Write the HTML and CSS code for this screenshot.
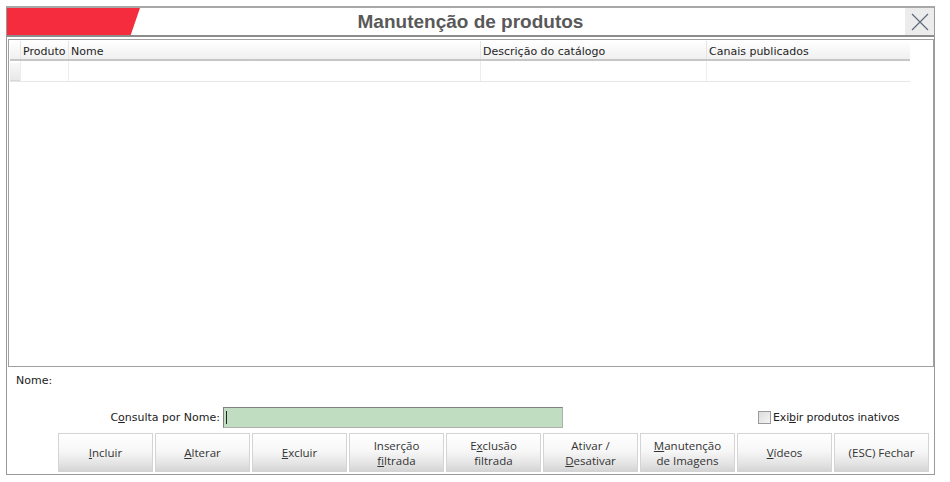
FILE: index.html
```html
<!DOCTYPE html>
<html lang="pt-BR">
<head>
<meta charset="utf-8">
<title>Manutenção de produtos</title>
<link rel="stylesheet" href="styles.css">
</head>
<body>
<div class="window">
  <div class="titlebar">
    <div class="brand"></div>
    <div class="title">Manutenção de produtos</div>
    <div class="close">
      <svg width="18" height="18" viewBox="0 0 18 18"><path d="M1 1 L17 17 M17 1 L1 17" stroke="#5f6b7c" stroke-width="1.2" fill="none"/></svg>
    </div>
  </div>
  <div class="grid">
    <div class="row head">
      <div class="cell ind"></div>
      <div class="cell c1">Produto</div>
      <div class="cell c2">Nome</div>
      <div class="cell c3">Descrição do catálogo</div>
      <div class="cell c4">Canais publicados</div>
    </div>
    <div class="row data">
      <div class="cell ind"></div>
      <div class="cell c1"></div>
      <div class="cell c2"></div>
      <div class="cell c3"></div>
      <div class="cell c4"></div>
    </div>
  </div>
  <div class="nome">Nome:</div>
  <div class="search">
    <label class="slabel">C<u>o</u>nsulta por Nome:</label>
    <div class="input"><span class="caret"></span></div>
    <div class="check"><span class="box"></span>Exi<u>b</u>ir produtos inativos</div>
  </div>
  <div class="buttons">
    <div class="btn"><span><u>I</u>ncluir</span></div>
    <div class="btn"><span><u>A</u>lterar</span></div>
    <div class="btn"><span><u>E</u>xcluir</span></div>
    <div class="btn"><span>Inserção<br><u>f</u>iltrada</span></div>
    <div class="btn"><span>E<u>x</u>clusão<br>filtrada</span></div>
    <div class="btn"><span>Ativar /<br><u>D</u>esativar</span></div>
    <div class="btn"><span><u>M</u>anutenção<br>de Imagens</span></div>
    <div class="btn"><span><u>V</u>ídeos</span></div>
    <div class="btn"><span>(ESC) Fechar</span></div>
  </div>
</div>
</body>
</html>
```
FILE: styles.css
```css
* { box-sizing: border-box; }
body {
  margin: 0;
  background: #ffffff;
  font-family: "DejaVu Sans", Tahoma, sans-serif;
  font-size: 11px;
  color: #222;
}
.window {
  margin: 6px 0 0 6px;
  width: 929px;
  height: 469px;
  border: 1px solid #9a9a9a;
  border-top: 2px solid #a8a8a8;
  display: flex;
  flex-direction: column;
  background: #fff;
}
.titlebar {
  height: 29px;
  display: flex;
  align-items: stretch;
  border-bottom: 2px solid #8c8c8c;
}
.brand {
  width: 133px;
  background: #f52c3d;
  clip-path: polygon(0 0, 100% 0, 93% 100%, 0 100%);
}
.title {
  flex: 1;
  text-align: center;
  font-family: "Liberation Sans", Arial, sans-serif;
  font-weight: bold;
  font-size: 19px;
  color: #595959;
  line-height: 28px;
  padding-right: 104px;
}
.close {
  width: 29px;
  background: #ececec;
  display: flex;
  align-items: center;
  justify-content: center;
}
.grid {
  margin: 2px 0 0 1px;
  width: 926px;
  height: 328px;
  border: 1px solid #a0a0a0;
  padding: 1px;
}
.row { display: flex; }
.cell { flex: none; padding-left: 2px; white-space: nowrap; }
.ind { width: 10px; }
.c1 { width: 48px; }
.c2 { width: 412px; }
.c3 { width: 226px; }
.c4 { width: 204px; }
.head {
  height: 20px;
  width: 900px;
  background: linear-gradient(#ffffff, #f0f0f0);
  border-bottom: 2px solid #c6c6c6;
}
.head .cell {
  line-height: 18px;
  padding-top: 2px;
  color: #1e1e1e;
  border-left: 1px solid #e4e4e4;
}
.head .ind { border-left: none; }
.data { height: 21px; width: 900px; border-bottom: 1px solid #e6e6e6; }
.data .cell { border-left: 1px solid #ececec; }
.data .ind {
  border-left: none;
  background: linear-gradient(#f8f8f8, #e8e8e8);
  border-bottom: 1px solid #d8d8d8;
  margin-top: 2px;
  height: 18px;
}
.nome {
  margin: 6px 0 0 9px;
  height: 16px;
  line-height: 16px;
  color: #222;
}
.search {
  margin-top: 17px;
  height: 22px;
  display: flex;
  align-items: center;
}
.slabel {
  width: 216px;
  text-align: right;
  padding-right: 3px;
  color: #222;
}
.input {
  width: 340px;
  height: 21px;
  background: #c1ddc1;
  border: 1px solid #808080;
  border-color: #808080 #b0b0b0 #b0b0b0 #808080;
  padding: 3px 2px;
}
.caret {
  display: block;
  width: 1px;
  height: 13px;
  background: #222;
}
.check {
  margin-left: 195px;
  display: flex;
  align-items: center;
  color: #222;
  letter-spacing: -0.15px;
}
.box {
  width: 13px;
  height: 13px;
  border: 1px solid #9a9a9a;
  background: linear-gradient(135deg, #dcdcdc, #f4f4f4);
  margin-right: 2px;
}
.buttons {
  margin: 5px 0 0 51px;
  display: flex;
  gap: 2px;
}
.btn {
  width: 95px;
  height: 39px;
  border: 1px solid #d4d4d4;
  background: linear-gradient(#ffffff 0%, #f7f7f7 45%, #e4e4e4 80%, #d4d4d4 100%);
  display: flex;
  align-items: center;
  justify-content: center;
  text-align: center;
  font-family: "Open Sans", "Noto Sans", sans-serif;
  font-size: 11.5px;
  line-height: 15px;
  color: #333;
}
u { text-decoration: underline; text-underline-offset: 1px; }
```
